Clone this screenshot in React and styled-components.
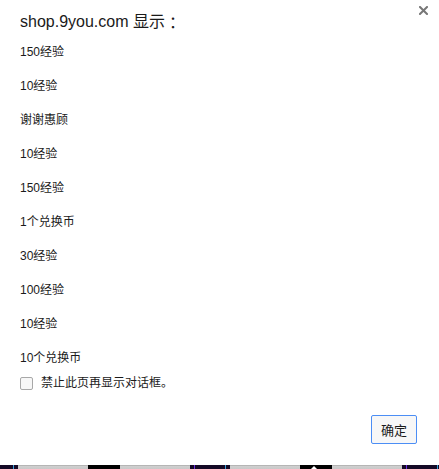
import React from 'react'
import styled, { createGlobalStyle } from 'styled-components';

const GlobalStyle = createGlobalStyle`
html, body {
  margin:0;
  padding:0;
  background:#ffffff;
}
body {
  font-family:"Liberation Sans","Noto Sans CJK SC",sans-serif;
  color:#222;
}
`;

const messages = ["150经验","10经验","谢谢惠顾","10经验","150经验","1个兑换币","30经验","100经验","10经验","10个兑换币"];

const strip = [
  {w:13,c:"#150a26"},{w:1,c:"#3a9ed6"},{w:4,c:"#150a26"},
  {w:70,c:"grey"},{w:32,c:"#000"},{w:70,c:"grey"},
  {w:4,c:"#150a26"},{w:1,c:"#6b2ee0"},{w:30,c:"#150a26"},{w:1,c:"#3a9ed6"},{w:4,c:"#150a26"},
  {w:70,c:"grey"},{w:32,c:"#000",mark:true},{w:70,c:"grey"},
  {w:4,c:"#150a26"},{w:1,c:"#6b2ee0"},{w:30,c:"#150a26"},{w:1,c:"#3a9ed6"},{w:2,c:"#150a26"},
];

function App() {
  return (
    <Page>
      <GlobalStyle />
      <Dialog>
        <CloseButton aria-label="关闭">
          <svg width="9" height="9" viewBox="0 0 9 9">
            <path d="M1 1 L8 8 M8 1 L1 8" stroke="#777" strokeWidth="2" strokeLinecap="square" />
          </svg>
        </CloseButton>
        <Title>shop.9you.com 显示<Colon>：</Colon></Title>
        <Message>{messages.join("\n\n")}</Message>
        <CheckRow>
          <CheckBox type="checkbox" />
          <CheckLabel>禁止此页再显示对话框。</CheckLabel>
        </CheckRow>
        <Footer>
          <OkButton>确定</OkButton>
        </Footer>
      </Dialog>
      <Strip>
        {strip.map((s,i) => (
          <Segment key={i} $w={s.w} $c={s.c}>
            {s.mark && <Mark />}
          </Segment>
        ))}
      </Strip>
    </Page>
  );
}

export default App

const Page = styled.div`
display:flex;
flex-direction:column;
width:439px;
height:469px;
overflow:hidden;
`;

const Dialog = styled.div`
position:relative;
height:465px;
box-sizing:border-box;
padding:13px 22px 0 20px;
background:#fff;
display:flex;
flex-direction:column;
`;

const CloseButton = styled.div`
position:absolute;
top:6px;
right:11px;
width:9px;
height:9px;
display:flex;
`;

const Title = styled.div`
height:18px;
font-size:16px;
line-height:18px;
color:#1a1a1a;
`;

const Colon = styled.span`
display:inline-block;
height:18px;
line-height:18px;
vertical-align:top;
font-family:"Noto Sans CJK JP",sans-serif;
`;

const Message = styled.div`
margin-top:13px;
font-size:12px;
line-height:17px;
white-space:pre-wrap;
color:#1a1a1a;
`;

const CheckRow = styled.label`
display:flex;
align-items:center;
margin-top:10px;
height:13px;
font-size:12px;
`;

const CheckBox = styled.input`
appearance:none;
margin:0 8px 0 0;
width:13px;
height:13px;
box-sizing:border-box;
border:1px solid #a8a8a8;
border-radius:2px;
background:#f7f7f7;
`;

const CheckLabel = styled.span`
line-height:13px;
color:#1a1a1a;
`;

const Footer = styled.div`
display:flex;
justify-content:flex-end;
margin-top:25px;
`;

const OkButton = styled.button`
width:46px;
height:29px;
padding:0;
box-sizing:border-box;
border:1px solid #4c8ef5;
border-radius:2px;
background:#f7f7f7;
font-family:"Liberation Sans","Noto Sans CJK SC",sans-serif;
font-size:13px;
color:#1a1a1a;
`;

const Strip = styled.div`
display:flex;
height:4px;
`;

const Segment = styled.div`
position:relative;
flex:none;
width:${p => p.$w}px;
height:100%;
background:${p => p.$c === "grey" ? "linear-gradient(#9a9a9a 0, #d0d0d0 1px, #c8c8c8 100%)" : p.$c};
`;

const Mark = styled.div`
position:absolute;
left:11px;
bottom:0;
width:0;
height:0;
border-left:3px solid transparent;
border-right:3px solid transparent;
border-bottom:3px solid #fff;
`;
